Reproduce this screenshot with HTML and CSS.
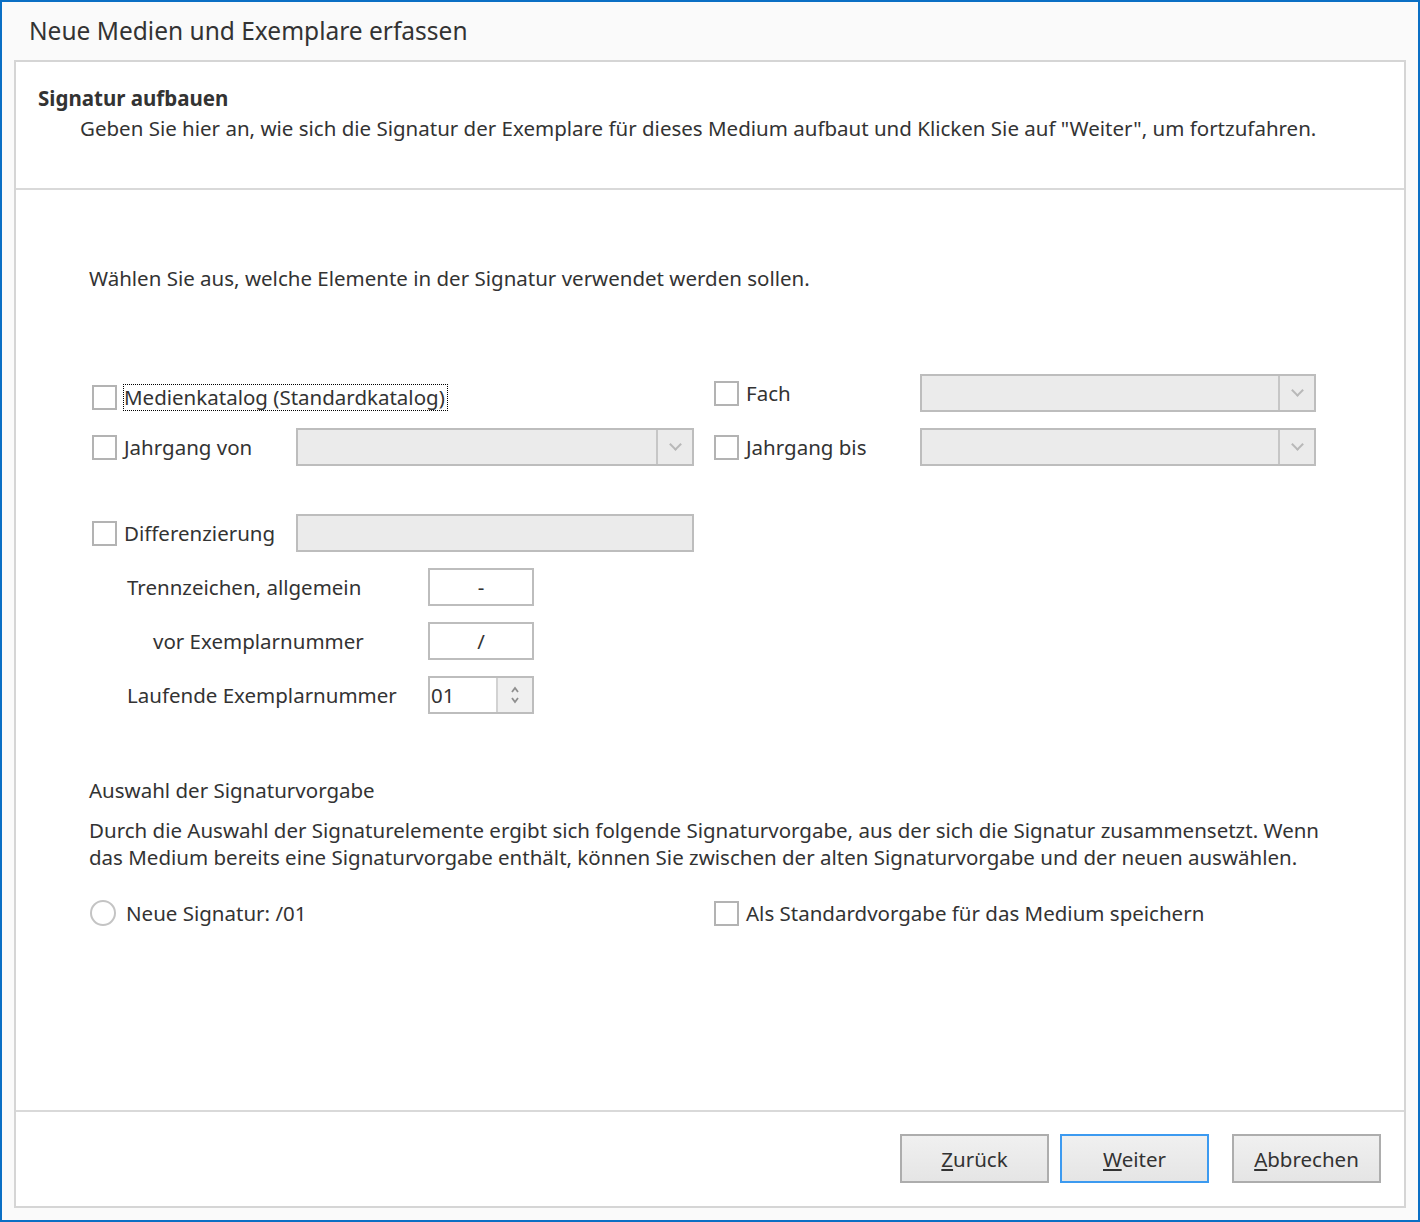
FILE: index.html
```html
<!DOCTYPE html>
<html lang="de">

<head>
  <meta charset="UTF-8">
  <meta name="viewport" content="width=device-width, initial-scale=1.0">
  <title>Neue Medien und Exemplare erfassen</title>
  <link rel="stylesheet" href="styles.css">
</head>

<body>
  <div class="window">
    <div class="title">Neue Medien und Exemplare erfassen</div>

    <div class="panel">
      <div class="panel-head">
        <div class="head-title">Signatur aufbauen</div>
        <div class="head-text">Geben Sie hier an, wie sich die Signatur der Exemplare für dieses Medium aufbaut und Klicken Sie auf "Weiter", um fortzufahren.</div>
      </div>

      <div class="panel-body">
        <p class="intro">Wählen Sie aus, welche Elemente in der Signatur verwendet werden sollen.</p>

        <div class="fields">
          <label class="check wide focus-row">
            <span class="box"></span>
            <span class="focus">Medienkatalog (Standardkatalog)</span>
          </label>
          <label class="check right">
            <span class="box"></span>
            <span>Fach</span>
          </label>
          <div class="select"><span class="arrow"></span></div>

          <label class="check">
            <span class="box"></span>
            <span>Jahrgang von</span>
          </label>
          <div class="select"><span class="arrow"></span></div>
          <label class="check right">
            <span class="box"></span>
            <span>Jahrgang bis</span>
          </label>
          <div class="select"><span class="arrow"></span></div>

          <label class="check last-row">
            <span class="box"></span>
            <span>Differenzierung</span>
          </label>
          <div class="select last-row"></div>
        </div>

        <div class="separators">
          <span class="sep-label">Trennzeichen, allgemein</span>
          <div class="small-input">-</div>
          <span class="sep-label indent">vor Exemplarnummer</span>
          <div class="small-input">/</div>
          <span class="sep-label">Laufende Exemplarnummer</span>
          <div class="small-input spinner">
            <span class="spin-value">01</span>
            <span class="spin-buttons">
              <svg width="12" height="10" viewBox="0 0 12 10"><path d="M3 7 L6 3 L9 7" fill="none" stroke="#8f8f8f" stroke-width="1.8"/></svg>
              <svg width="12" height="10" viewBox="0 0 12 10"><path d="M3 3 L6 7 L9 3" fill="none" stroke="#8f8f8f" stroke-width="1.8"/></svg>
            </span>
          </div>
        </div>

        <div class="preset">
          <div class="preset-title">Auswahl der Signaturvorgabe</div>
          <p class="preset-text">Durch die Auswahl der Signaturelemente ergibt sich folgende Signaturvorgabe, aus der sich die Signatur zusammensetzt. Wenn das Medium bereits eine Signaturvorgabe enthält, können Sie zwischen der alten Signaturvorgabe und der neuen auswählen.</p>
          <div class="preset-row">
            <label class="check radio-item">
              <span class="radio"></span>
              <span>Neue Signatur: /01</span>
            </label>
            <label class="check">
              <span class="box"></span>
              <span>Als Standardvorgabe für das Medium speichern</span>
            </label>
          </div>
        </div>
      </div>

      <div class="panel-foot">
        <button type="button" class="btn"><u>Z</u>urück</button>
        <button type="button" class="btn default"><u>W</u>eiter</button>
        <button type="button" class="btn last"><u>A</u>bbrechen</button>
      </div>
    </div>
  </div>
</body>

</html>
```

FILE: styles.css
```css
* {
  box-sizing: border-box;
}

body {
  margin: 0;
  font-family: "Noto Sans", "Open Sans", sans-serif;
  font-size: 20.5px;
  color: #333;
}

.window {
  width: 1420px;
  height: 1222px;
  border: 2px solid #0a6fc4;
  background-color: #fafafa;
  display: flex;
  flex-direction: column;
}

.title {
  height: 58px;
  padding-left: 27px;
  padding-top: 12px;
  font-size: 24.5px;
  color: #333;
}

.panel {
  flex: 1;
  margin: 0 12px 12px;
  border: 2px solid #d5d5d5;
  background-color: #fff;
  display: flex;
  flex-direction: column;
}

.panel-head {
  height: 128px;
  border-bottom: 2px solid #d9d9d9;
  padding: 21px 0 0 22px;
}

.head-title {
  font-weight: bold;
  line-height: 30px;
}

.head-text {
  padding-left: 42px;
  line-height: 30px;
}

.panel-body {
  flex: 1;
  padding-left: 73px;
}

.intro {
  margin: 74px 0 0;
  line-height: 28px;
}

/* obere Auswahlfelder */
.fields {
  margin-top: 82px;
  display: grid;
  grid-template-columns: 204px 398px 226px 396px;
  grid-template-rows: 38px 38px 16px 38px;
  row-gap: 16px;
  padding-left: 3px;
}

.fields .right {
  margin-left: 20px;
}

.fields .wide {
  grid-column: span 2;
}

.fields .last-row {
  grid-row: 4;
}

.check {
  display: flex;
  align-items: center;
  gap: 7px;
}

.box {
  width: 25px;
  height: 25px;
  border: 2px solid #b3b3b3;
  background-color: #fff;
  flex-shrink: 0;
}

.focus-row {
  padding-top: 8px;
}

.focus {
  outline: 1px dotted #000;
  line-height: 25px;
  padding-right: 2px;
}

.select {
  border: 2px solid #bdbdbd;
  background-color: #ebebeb;
  display: flex;
  justify-content: flex-end;
}

.arrow {
  width: 36px;
  border-left: 2px solid #c6c6c6;
  display: flex;
  align-items: center;
  justify-content: center;
}

.arrow::after {
  content: "";
  width: 7px;
  height: 7px;
  border-right: 2px solid #b8b8b8;
  border-bottom: 2px solid #b8b8b8;
  transform: translateY(-3px) rotate(45deg);
}

/* Trennzeichen */
.separators {
  margin-top: 16px;
  display: grid;
  grid-template-columns: 301px 106px;
  grid-auto-rows: 38px;
  row-gap: 16px;
  align-items: center;
  padding-left: 38px;
}

.sep-label.indent {
  padding-left: 26px;
}

.small-input {
  height: 38px;
  border: 2px solid #bdbdbd;
  background-color: #fff;
  display: flex;
  align-items: center;
  justify-content: center;
}

.spinner {
  justify-content: space-between;
}

.spin-value {
  padding-left: 1px;
}

.spin-buttons {
  width: 36px;
  height: 100%;
  border-left: 2px solid #d2d2d2;
  background-color: #f0f0f0;
  display: flex;
  flex-direction: column;
  align-items: center;
  justify-content: center;
}

/* Signaturvorgabe */
.preset {
  margin-top: 62px;
}

.preset-title {
  line-height: 28px;
}

.preset-text {
  margin: 13px 0 0;
  width: 1240px;
  line-height: 27px;
}

.preset-row {
  margin-top: 28px;
  display: flex;
}

.radio-item {
  width: 625px;
  padding-left: 1px;
  gap: 10px;
}

.radio {
  width: 26px;
  height: 26px;
  border-radius: 50%;
  border: 2px solid #c4c4c4;
}

/* Schaltflächen */
.panel-foot {
  height: 96px;
  border-top: 2px solid #d9d9d9;
  display: flex;
  justify-content: flex-end;
  padding: 22px 23px 0 0;
  gap: 11px;
}

.btn {
  width: 149px;
  height: 49px;
  border: 2px solid #adadad;
  background: linear-gradient(#f0f0f0, #e5e5e5);
  font-family: inherit;
  font-size: 20.5px;
  color: #333;
}

.btn.default {
  border-color: #3c9af0;
}

.btn.last {
  margin-left: 12px;
}
```
